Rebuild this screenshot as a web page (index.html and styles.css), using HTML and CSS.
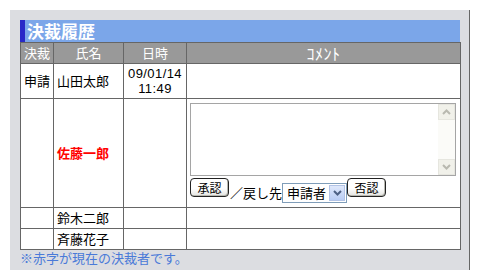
FILE: index.html
```html
<!DOCTYPE html>
<html lang="ja">
<head>
<meta charset="UTF-8">
<title>決裁履歴</title>
<link rel="stylesheet" href="styles.css">
</head>
<body>

<div class="panel">
    <h2 class="title">決裁履歴</h2>
    <table class="history">
        <colgroup>
            <col class="col-status">
            <col class="col-name">
            <col class="col-date">
            <col class="col-comment">
        </colgroup>
        <tr class="head">
            <th>決裁</th>
            <th>氏名</th>
            <th>日時</th>
            <th class="kana">ｺﾒﾝﾄ</th>
        </tr>
        <tr class="row-done">
            <td class="status">申請</td>
            <td class="name">山田太郎</td>
            <td class="date">09/01/14<br>11:49</td>
            <td></td>
        </tr>
        <tr class="row-current">
            <td></td>
            <td class="name current">佐藤一郎</td>
            <td></td>
            <td class="comment">
                <div class="memo">
                    <textarea></textarea>
                    <div class="scroll">
                        <span class="scroll-btn">
                            <svg width="9" height="6" viewBox="0 0 9 6"><path d="M1 5 L4.5 1.5 L8 5" fill="none" stroke="#b9b9b0" stroke-width="2"/></svg>
                        </span>
                        <span class="scroll-track"></span>
                        <span class="scroll-btn">
                            <svg width="9" height="6" viewBox="0 0 9 6"><path d="M1 1 L4.5 4.5 L8 1" fill="none" stroke="#b9b9b0" stroke-width="2"/></svg>
                        </span>
                    </div>
                </div>
                <div class="actions">
                    <button class="btn">承認</button>
                    <span class="back-label">／戻し先</span>
                    <span class="select">
                        <span class="select-value">申請者</span>
                        <span class="select-arrow">
                            <svg width="9" height="6" viewBox="0 0 9 6"><path d="M1 1 L4.5 4.5 L8 1" fill="none" stroke="#4d6185" stroke-width="2"/></svg>
                        </span>
                    </span>
                    <button class="btn">否認</button>
                </div>
            </td>
        </tr>
        <tr class="row-wait">
            <td></td>
            <td class="name">鈴木二郎</td>
            <td></td>
            <td></td>
        </tr>
        <tr class="row-wait">
            <td></td>
            <td class="name">斉藤花子</td>
            <td></td>
            <td></td>
        </tr>
    </table>
    <p class="note">※赤字が現在の決裁者です。</p>
</div>

</body>
</html>
```

FILE: styles.css
```css
body {
    margin: 0;
    background-color: #fff;
    font-family: "Noto Sans CJK JP", "DejaVu Sans", sans-serif;
    font-size: 13px;
    color: #000;
}

.panel {
    box-sizing: border-box;
    width: 460px;
    height: 260px;
    margin: 10px 0 0 10px;
    padding: 10px 9px 0 10px;
    background-color: #dcdde1;
    border-right: 1px solid #666;
}

/* Title bar */
.title {
    margin: 0;
    height: 22px;
    width: 440px;
    box-sizing: border-box;
    padding-left: 2px;
    border-left: 5px solid #2828c8;
    background-color: #7ba6e9;
    color: #fff;
    font-size: 17px;
    font-weight: bold;
    line-height: 22px;
}

/* History table */
.history {
    width: 441px;
    table-layout: fixed;
    border-collapse: collapse;
    background-color: #fff;
}

.col-status { width: 33px; }
.col-name { width: 70px; }
.col-date { width: 63px; }

.history th,
.history td {
    border: 1px solid #666;
    padding: 0 3px;
    line-height: 16px;
}

.history th {
    background-color: #999;
    color: #fff;
    font-weight: normal;
    text-align: center;
}

.history th.kana {
    font-size: 16px;
    letter-spacing: 0.5px;
    line-height: 16px;
}

.head { height: 21px; }
.row-done { height: 35px; }
.row-current { height: 109px; }
.row-wait { height: 21px; }

.status,
.date {
    text-align: center;
}

.history td.date {
    padding: 0;
    font-family: "Liberation Sans", sans-serif;
    font-size: 13px;
    letter-spacing: 0.4px;
    line-height: 15px;
}

.name {
    padding-left: 3px;
}

.current {
    color: #f00;
    font-weight: bold;
}

/* Comment input */
.history td.comment {
    vertical-align: top;
    padding: 4px 3px 0 3px;
}

.memo {
    display: flex;
    width: 266px;
    height: 73px;
    box-sizing: border-box;
    border: 1px solid #a5a5a5;
    background-color: #fff;
}

.memo textarea {
    flex: 1;
    border: none;
    margin: 0;
    padding: 0;
    resize: none;
    outline: none;
}

.scroll {
    display: flex;
    flex-direction: column;
    width: 17px;
    background-color: #fbfbf8;
}

.scroll-btn {
    display: flex;
    justify-content: center;
    align-items: center;
    height: 16px;
    box-sizing: border-box;
    border: 1px solid #e6e6df;
    background-color: #f1f1ea;
}

.scroll-track {
    flex: 1;
}

.actions {
    display: flex;
    align-items: flex-start;
    margin-top: 2px;
}

.btn {
    width: 39px;
    height: 19px;
    padding: 0;
    font-family: inherit;
    font-size: 12px;
    line-height: 15px;
    color: #000;
    border: 1px solid #222;
    border-radius: 4px;
    background: linear-gradient(#fff 55%, #e4e4e0);
    box-shadow: inset -1px -1px 0 #b8b8b0;
}

.back-label {
    margin: 7px 0 0 1px;
    line-height: 15px;
}

.select {
    display: flex;
    width: 65px;
    height: 20px;
    box-sizing: border-box;
    margin-top: 5px;
    border: 1px solid #7f9db9;
    background-color: #fff;
}

.select-value {
    flex: 1;
    padding-left: 4px;
    line-height: 18px;
}

.select-arrow {
    display: flex;
    justify-content: center;
    align-items: center;
    width: 16px;
    margin: 1px;
    background: linear-gradient(#dfe8fb, #b9cdf5);
    border: 1px solid #b2c3e6;
    box-sizing: border-box;
}

.note {
    margin: 0;
    color: #4a7ad8;
    line-height: 16px;
}
```
